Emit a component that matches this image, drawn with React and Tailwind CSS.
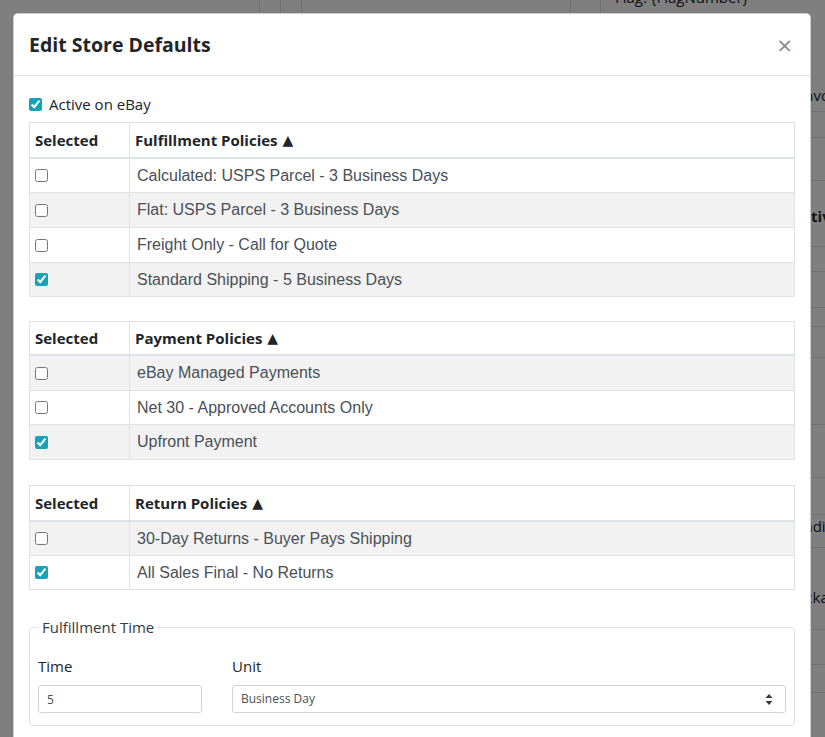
import React from "react";

const FULFILLMENT = [
  { label: "Calculated: USPS Parcel - 3 Business Days", checked: false, h: "h-[33px]", gray: false },
  { label: "Flat: USPS Parcel - 3 Business Days", checked: false, h: "h-[35px]", gray: true },
  { label: "Freight Only - Call for Quote", checked: false, h: "h-[35px]", gray: false },
  { label: "Standard Shipping - 5 Business Days", checked: true, h: "h-[34px]", gray: true },
];

const PAYMENT = [
  { label: "eBay Managed Payments", checked: false, h: "h-[34px]", gray: true },
  { label: "Net 30 - Approved Accounts Only", checked: false, h: "h-[34px]", gray: false },
  { label: "Upfront Payment", checked: true, h: "h-[35px]", gray: true },
];

const RETURNS = [
  { label: "30-Day Returns - Buyer Pays Shipping", checked: false, h: "h-[33px]", gray: true },
  { label: "All Sales Final - No Returns", checked: true, h: "h-[34px]", gray: false },
];

// rows of the page behind the backdrop, only the right edge shows
const BG_ROWS = [
  { h: "h-[26px]" }, { h: "h-[43px]" },
  { h: "h-[66px]", text: "Active", pl: "pl-[192px]", bold: true, pt: "pt-[24px]" },
  { h: "h-[25px]" }, { h: "h-[36px]" }, { h: "h-[19px]" }, { h: "h-[31px]" },
  { h: "h-[67px]" }, { h: "h-[53px]" }, { h: "h-[37px]" },
  { h: "h-[33px]", text: "Pending", pl: "pl-[185px]", pt: "pt-[-2px]" },
  { h: "h-[82px]", text: "Packaging", pl: "pl-[187px]", pt: "pt-[38px]" },
  { h: "h-[35px]" }, { h: "h-[28px]" }, { h: "h-[60px]" },
];

function Check({ checked }) {
  return (
    <input
      type="checkbox"
      defaultChecked={checked}
      className="m-0 h-[13px] w-[13px] accent-[#17a2b8]"
    />
  );
}

function PolicyTable({ title, rows, headH, className }) {
  return (
    <div className={`border border-[#dee2e6] ${className || ""}`}>
      <div className={`flex ${headH} border-b-2 border-[#dee2e6] text-[15px] font-bold text-[#212529]`}>
        <div className="flex w-[100px] items-center border-r border-[#dee2e6] pl-[5px]">Selected</div>
        <div className="flex flex-1 items-center pl-[5px]">
          {title} <span className="ml-[5px] font-['DejaVu_Sans'] text-[14px]">▲</span>
        </div>
      </div>
      {rows.map((r, i) => (
        <div
          key={r.label}
          className={`flex ${r.h} ${i > 0 ? "border-t border-[#dee2e6]" : ""} ${r.gray ? "bg-[#f2f2f2]" : "bg-white"}`}
        >
          <div className="flex w-[100px] items-center border-r border-[#dee2e6] pl-[5px]">
            <Check checked={r.checked} />
          </div>
          <div className="flex flex-1 items-center pl-[7px] font-['Liberation_Sans',Arial,sans-serif] text-[16px] text-[#495057]">
            {r.label}
          </div>
        </div>
      ))}
    </div>
  );
}

export default function App() {
  return (
    <div className="relative h-[737px] w-full overflow-hidden bg-white font-['Open_Sans',sans-serif]">
      {/* page behind the modal */}
      <div className="flex h-full">
        <div className="w-[259px]" />
        <div className="w-[21px] border-l border-[#dee2e6]" />
        <div className="w-[21px] border-l border-[#dee2e6]" />
        <div className="w-[269px] border-l border-[#dee2e6]" />
        <div className="w-[30px] border-l border-[#dee2e6]" />
        <div className="flex-1 overflow-hidden border-l border-[#dee2e6] text-[15px] text-[#212529]">
          <div className="-mt-[13px] h-[125px] border-b border-[#dee2e6] whitespace-nowrap">
            <div className="pl-[14px] leading-[20px]">Flag: {"{FlagNumber}"}</div>
            <div className="mt-[78px] pl-[199px] leading-[20px]">Invoice</div>
          </div>
          {BG_ROWS.map((r, i) => (
            <div key={i} className={`${r.h} border-b border-[#dee2e6] whitespace-nowrap ${r.pl || ""} ${r.pt || ""} ${r.bold ? "font-bold" : ""}`}>
              {r.text}
            </div>
          ))}
        </div>
      </div>

      <div className="absolute inset-0 bg-black/50" />

      {/* modal */}
      <div className="absolute left-[13px] top-[13px] w-[798px] rounded-[5px] border border-black/20 bg-white">
        <div className="flex h-[62px] items-center justify-between border-b border-[#dee2e6] pl-[15px] pr-[18px]">
          <h5 className="text-[19.5px] font-bold text-[#212529]">Edit Store Defaults</h5>
          <span className="text-[26px] leading-none text-[#8a8a8a]">×</span>
        </div>

        <div className="px-[15px] pt-[16px] pb-[20px]">
          <label className="flex h-[24px] items-center gap-[7px] text-[15px] text-[#212529]">
            <Check checked />
            Active on eBay
          </label>

          <PolicyTable className="mt-[6px]" title="Fulfillment Policies" rows={FULFILLMENT} headH="h-[36px]" />
          <PolicyTable className="mt-[24px]" title="Payment Policies" rows={PAYMENT} headH="h-[34px]" />
          <PolicyTable className="mt-[25px]" title="Return Policies" rows={RETURNS} headH="h-[36px]" />

          <fieldset className="mt-[27px] rounded-[4px] border border-[#dee2e6] px-[8px] pb-[12px]">
            <legend className="px-[4px] text-[15px] leading-[20px] text-[#343a40]">Fulfillment Time</legend>
            <div className="flex gap-[30px] pt-[18px]">
              <div className="w-[164px]">
                <div className="text-[15px] leading-[22px] text-[#212529]">Time</div>
                <input
                  defaultValue="5"
                  className="mt-[8px] h-[28px] w-full rounded-[3px] border border-[#ced4da] px-[8px] text-[12px] text-[#495057]"
                />
              </div>
              <div className="flex-1">
                <div className="text-[15px] leading-[22px] text-[#212529]">Unit</div>
                <div className="mt-[8px] flex h-[28px] items-center justify-between rounded-[3px] border border-[#ced4da] pl-[8px] pr-[12px] text-[12px] text-[#495057]">
                  <span>Business Day</span>
                  <svg width="8" height="11" viewBox="0 0 8 11" fill="#343a40">
                    <path d="M4 0 L7.5 4 H0.5 Z" />
                    <path d="M4 11 L7.5 7 H0.5 Z" />
                  </svg>
                </div>
              </div>
            </div>
          </fieldset>
        </div>
      </div>
    </div>
  );
}
